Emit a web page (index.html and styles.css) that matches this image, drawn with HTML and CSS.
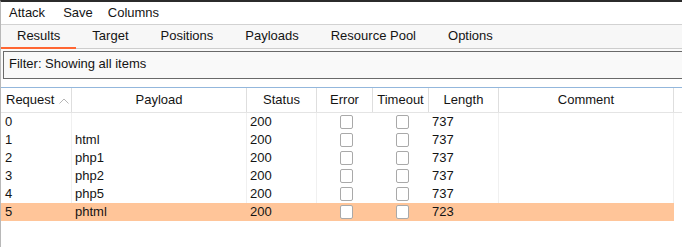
FILE: index.html
```html
<!DOCTYPE html>
<html>
<head>
<meta charset="utf-8">
<link rel="stylesheet" href="styles.css">
</head>
<body>
<div class="app">
  <div class="menubar">
    <span class="menu-item attack">Attack</span>
    <span class="menu-item save">Save</span>
    <span class="menu-item">Columns</span>
  </div>
  <div class="tabs">
    <span class="tab active">Results</span>
    <span class="tab">Target</span>
    <span class="tab">Positions</span>
    <span class="tab">Payloads</span>
    <span class="tab">Resource Pool</span>
    <span class="tab">Options</span>
  </div>
  <div class="filter-area">
    <div class="filter">Filter: Showing all items</div>
  </div>
  <div class="table">
    <div class="row head">
      <div class="c c1">Request<svg class="sort" width="10" height="6" viewBox="0 0 10 6"><polyline points="0.5,5.5 5,1 9.5,5.5" fill="none" stroke="#b5b5b5" stroke-width="1"/></svg></div>
      <div class="c c2">Payload</div>
      <div class="c c3">Status</div>
      <div class="c c4">Error</div>
      <div class="c c5">Timeout</div>
      <div class="c c6">Length</div>
      <div class="c c7">Comment</div>
      <div class="c fill"></div>
    </div>
    <div class="row">
      <div class="c c1">0</div><div class="c c2"></div><div class="c c3">200</div>
      <div class="c c4"><span class="cb"></span></div><div class="c c5"><span class="cb"></span></div>
      <div class="c c6">737</div><div class="c c7"></div><div class="c fill"></div>
    </div>
    <div class="row">
      <div class="c c1">1</div><div class="c c2">html</div><div class="c c3">200</div>
      <div class="c c4"><span class="cb"></span></div><div class="c c5"><span class="cb"></span></div>
      <div class="c c6">737</div><div class="c c7"></div><div class="c fill"></div>
    </div>
    <div class="row">
      <div class="c c1">2</div><div class="c c2">php1</div><div class="c c3">200</div>
      <div class="c c4"><span class="cb"></span></div><div class="c c5"><span class="cb"></span></div>
      <div class="c c6">737</div><div class="c c7"></div><div class="c fill"></div>
    </div>
    <div class="row">
      <div class="c c1">3</div><div class="c c2">php2</div><div class="c c3">200</div>
      <div class="c c4"><span class="cb"></span></div><div class="c c5"><span class="cb"></span></div>
      <div class="c c6">737</div><div class="c c7"></div><div class="c fill"></div>
    </div>
    <div class="row">
      <div class="c c1">4</div><div class="c c2">php5</div><div class="c c3">200</div>
      <div class="c c4"><span class="cb"></span></div><div class="c c5"><span class="cb"></span></div>
      <div class="c c6">737</div><div class="c c7"></div><div class="c fill"></div>
    </div>
    <div class="row selected">
      <div class="c c1">5</div><div class="c c2">phtml</div><div class="c c3">200</div>
      <div class="c c4"><span class="cb"></span></div><div class="c c5"><span class="cb"></span></div>
      <div class="c c6">723</div><div class="c c7"></div><div class="c fill"></div>
    </div>
  </div>
</div>
</body>
</html>
```
FILE: styles.css
```css
html, body {
  margin: 0;
  padding: 0;
  background: #ffffff;
  overflow: hidden;
}
body {
  font-family: "Liberation Sans", Arial, sans-serif;
  font-size: 13px;
  color: #141414;
}
.app {
  width: 682px;
  height: 247px;
  box-sizing: border-box;
  border-top: 2px solid #2b2b2b;
  border-left: 1px solid #b8b8b8;
  overflow: hidden;
}
.menubar {
  display: flex;
  height: 22px;
  line-height: 21px;
  padding-left: 8px;
  background: #ffffff;
  border-bottom: 1px solid #d2d2d2;
}
.menu-item.attack { margin-right: 18px; }
.menu-item.save { margin-right: 15px; }
.tabs {
  display: flex;
  height: 23px;
  background: #f7f7f7;
  border-bottom: 1px solid #cdcdcd;
}
.tab {
  box-sizing: border-box;
  height: 24px;
  margin-bottom: -1px;
  padding: 0 16px;
  line-height: 21px;
  border-bottom: 2px solid transparent;
}
.tab.active {
  border-bottom-color: #ff6633;
}
.filter-area {
  padding: 2px 0 0 2px;
  background: #fafafa;
}
.filter {
  width: 700px;
  height: 26px;
  line-height: 24px;
  padding-left: 5px;
  background: #f9f9f9;
  border: 1px solid #6a6a6a;
  border-right: none;
}
.table {
  margin-top: 8px;
  border-top: 1px solid #93b7dc;
}
.row {
  display: grid;
  grid-template-columns: 71px 175px 70px 56px 56px 70px 175px 1fr;
  height: 18px;
  line-height: 18px;
}
.row.head {
  height: 24px;
  line-height: 24px;
  border-bottom: 1px solid #e4e4e4;
}
.c {
  box-sizing: border-box;
  padding-left: 3px;
  white-space: nowrap;
  border-right: 1px solid #f0f0f0;
}
.c.c1 { padding-left: 4px; }
.c4, .c5 {
  border-right-color: transparent;
  display: flex;
  justify-content: center;
  align-items: flex-start;
  padding-left: 3px;
}
.c.fill { border-right: none; }
.head .c {
  text-align: center;
  padding-left: 0;
  border-right: 1px solid #dedede;
}
.head .c4, .head .c5 { display: block; }
.head .c.c1 {
  text-align: left;
  padding-left: 5px;
  display: flex;
  align-items: center;
}
.head .c.fill { border-right: none; }
.sort {
  margin-left: 5px;
  margin-top: 1px;
}
.cb {
  box-sizing: border-box;
  width: 13px;
  height: 14px;
  margin-top: 2px;
  border: 1px solid #a9a9a9;
  border-radius: 2px;
  background: #ffffff;
}
.row.selected .c {
  background: #ffc599;
  border-right-color: transparent;
}
.row.selected .c.fill {
  background: #ffffff;
}
```
